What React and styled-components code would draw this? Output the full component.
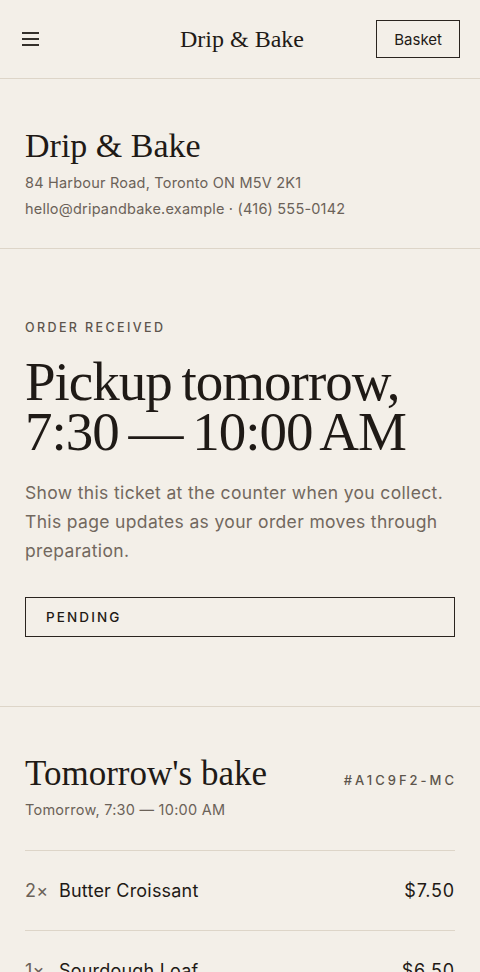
import React from "react"
import styled, { createGlobalStyle } from 'styled-components'

const GlobalStyle = createGlobalStyle`
  html, body {
    margin: 0;
    padding: 0;
    background: #f3efe8;
  }
  body {
    font-family: Inter, "Noto Sans", sans-serif;
    color: #1f1a16;
    -webkit-font-smoothing: antialiased;
  }
  * { box-sizing: border-box; }
`

const serif = `"Liberation Serif", "DejaVu Serif", serif`

const Page = styled.div`
  width: 480px;
  min-height: 972px;
  background: #f3efe8;
`

const Header = styled.header`
  height: 79px;
  display: grid;
  grid-template-columns: 1fr auto 1fr;
  align-items: center;
  padding: 0 20px 0 22px;
  border-bottom: 1px solid #ddd5c8;
`

const MenuButton = styled.button`
  justify-self: start;
  width: 20px;
  height: 20px;
  padding: 0;
  border: 0;
  background: none;
  display: flex;
  align-items: center;
  color: #1f1a16;
`

const Logo = styled.div`
  font-family: ${serif};
  font-size: 24px;
  margin-left: 2px;
`

const BasketButton = styled.button`
  justify-self: end;
  height: 38px;
  padding: 0 17px;
  border: 1.5px solid #2a241f;
  background: none;
  font-family: Inter, sans-serif;
  font-size: 15px;
  color: #1f1a16;
`

const Section = styled.section`
  padding: ${p => p.$pad};
  border-bottom: ${p => p.$noBorder ? 'none' : '1px solid #ddd5c8'};
`

const ShopName = styled.h2`
  margin: 0;
  font-family: ${serif};
  font-weight: 400;
  font-size: 34px;
  line-height: 40px;
`

const Info = styled.p`
  margin: 0;
  font-size: 14.5px;
  line-height: 26px;
  letter-spacing: 0.2px;
  color: #6b6258;
  &:first-of-type { margin-top: 4px; }
`

const Eyebrow = styled.div`
  font-size: 12.5px;
  font-weight: 500;
  line-height: 18px;
  letter-spacing: 2.4px;
  text-transform: uppercase;
  color: #5d554c;
`

const Headline = styled.h1`
  margin: 20px 0 0;
  font-family: ${serif};
  font-weight: 400;
  font-size: 55px;
  line-height: 50px;
  letter-spacing: -1px;
  word-spacing: -3px;
`

const Lead = styled.p`
  margin: 21px 0 0;
  font-size: 17.5px;
  line-height: 29px;
  letter-spacing: 0.35px;
  color: #72685e;
`

const StatusBox = styled.div`
  margin-top: 32px;
  height: 40px;
  display: flex;
  align-items: center;
  padding-left: 20px;
  border: 1.5px solid #2a241f;
  font-size: 13.5px;
  font-weight: 500;
  letter-spacing: 2.1px;
  color: #1f1a16;
`

const BakeHead = styled.div`
  display: flex;
  justify-content: space-between;
  align-items: baseline;
`

const BakeTitle = styled.h3`
  margin: 0;
  font-family: ${serif};
  font-weight: 400;
  font-size: 35px;
  line-height: 38px;
`

const OrderId = styled.span`
  font-size: 13px;
  font-weight: 500;
  letter-spacing: 3px;
  color: #5d554c;
  margin-right: -2px;
`

const Slot = styled.div`
  margin-top: 7px;
  font-size: 14.5px;
  line-height: 20px;
  letter-spacing: 0.25px;
  color: #6b6258;
`

const Items = styled.ul`
  list-style: none;
  margin: 30px 0 0;
  padding: 0;
  border-top: 1px solid #ddd5c8;
`

const Item = styled.li`
  height: 80px;
  display: flex;
  align-items: center;
  border-bottom: 1px solid #ddd5c8;
  font-size: 18px;
  letter-spacing: 0.2px;
`

const Qty = styled.span`
  width: 34px;
  color: #6b6258;
`

const Name = styled.span`
  flex: 1;
`

const Price = styled.span`
  letter-spacing: 0.8px;
`

const items = [
  { qty: 2, name: 'Butter Croissant', price: '$7.50' },
  { qty: 1, name: 'Sourdough Loaf', price: '$6.50' },
]

const App = () => {
  return (
    <Page>
      <GlobalStyle />
      <Header>
        <MenuButton aria-label="Menu">
          <svg width="17" height="14" viewBox="0 0 17 14" fill="none" stroke="currentColor" strokeWidth="1.8">
            <line x1="0" y1="1" x2="17" y2="1" />
            <line x1="0" y1="7" x2="17" y2="7" />
            <line x1="0" y1="13" x2="17" y2="13" />
          </svg>
        </MenuButton>
        <Logo>Drip &amp; Bake</Logo>
        <BasketButton>Basket</BasketButton>
      </Header>

      <Section $pad="47px 25px 26px">
        <ShopName>Drip &amp; Bake</ShopName>
        <Info>84 Harbour Road, Toronto ON M5V 2K1</Info>
        <Info>hello@dripandbake.example · (416) 555-0142</Info>
      </Section>

      <Section $pad="70px 25px 69px">
        <Eyebrow>Order received</Eyebrow>
        <Headline>Pickup tomorrow,<br />7:30 — 10:00 AM</Headline>
        <Lead>Show this ticket at the counter when you collect. This page updates as your order moves through preparation.</Lead>
        <StatusBox>PENDING</StatusBox>
      </Section>

      <Section $pad="48px 25px 40px" $noBorder>
        <BakeHead>
          <BakeTitle>Tomorrow's bake</BakeTitle>
          <OrderId>#A1C9F2-MC</OrderId>
        </BakeHead>
        <Slot>Tomorrow, 7:30 — 10:00 AM</Slot>
        <Items>
          {items.map(it => (
            <Item key={it.name}>
              <Qty>{it.qty}×</Qty>
              <Name>{it.name}</Name>
              <Price>{it.price}</Price>
            </Item>
          ))}
        </Items>
      </Section>
    </Page>
  )
}

export default App
